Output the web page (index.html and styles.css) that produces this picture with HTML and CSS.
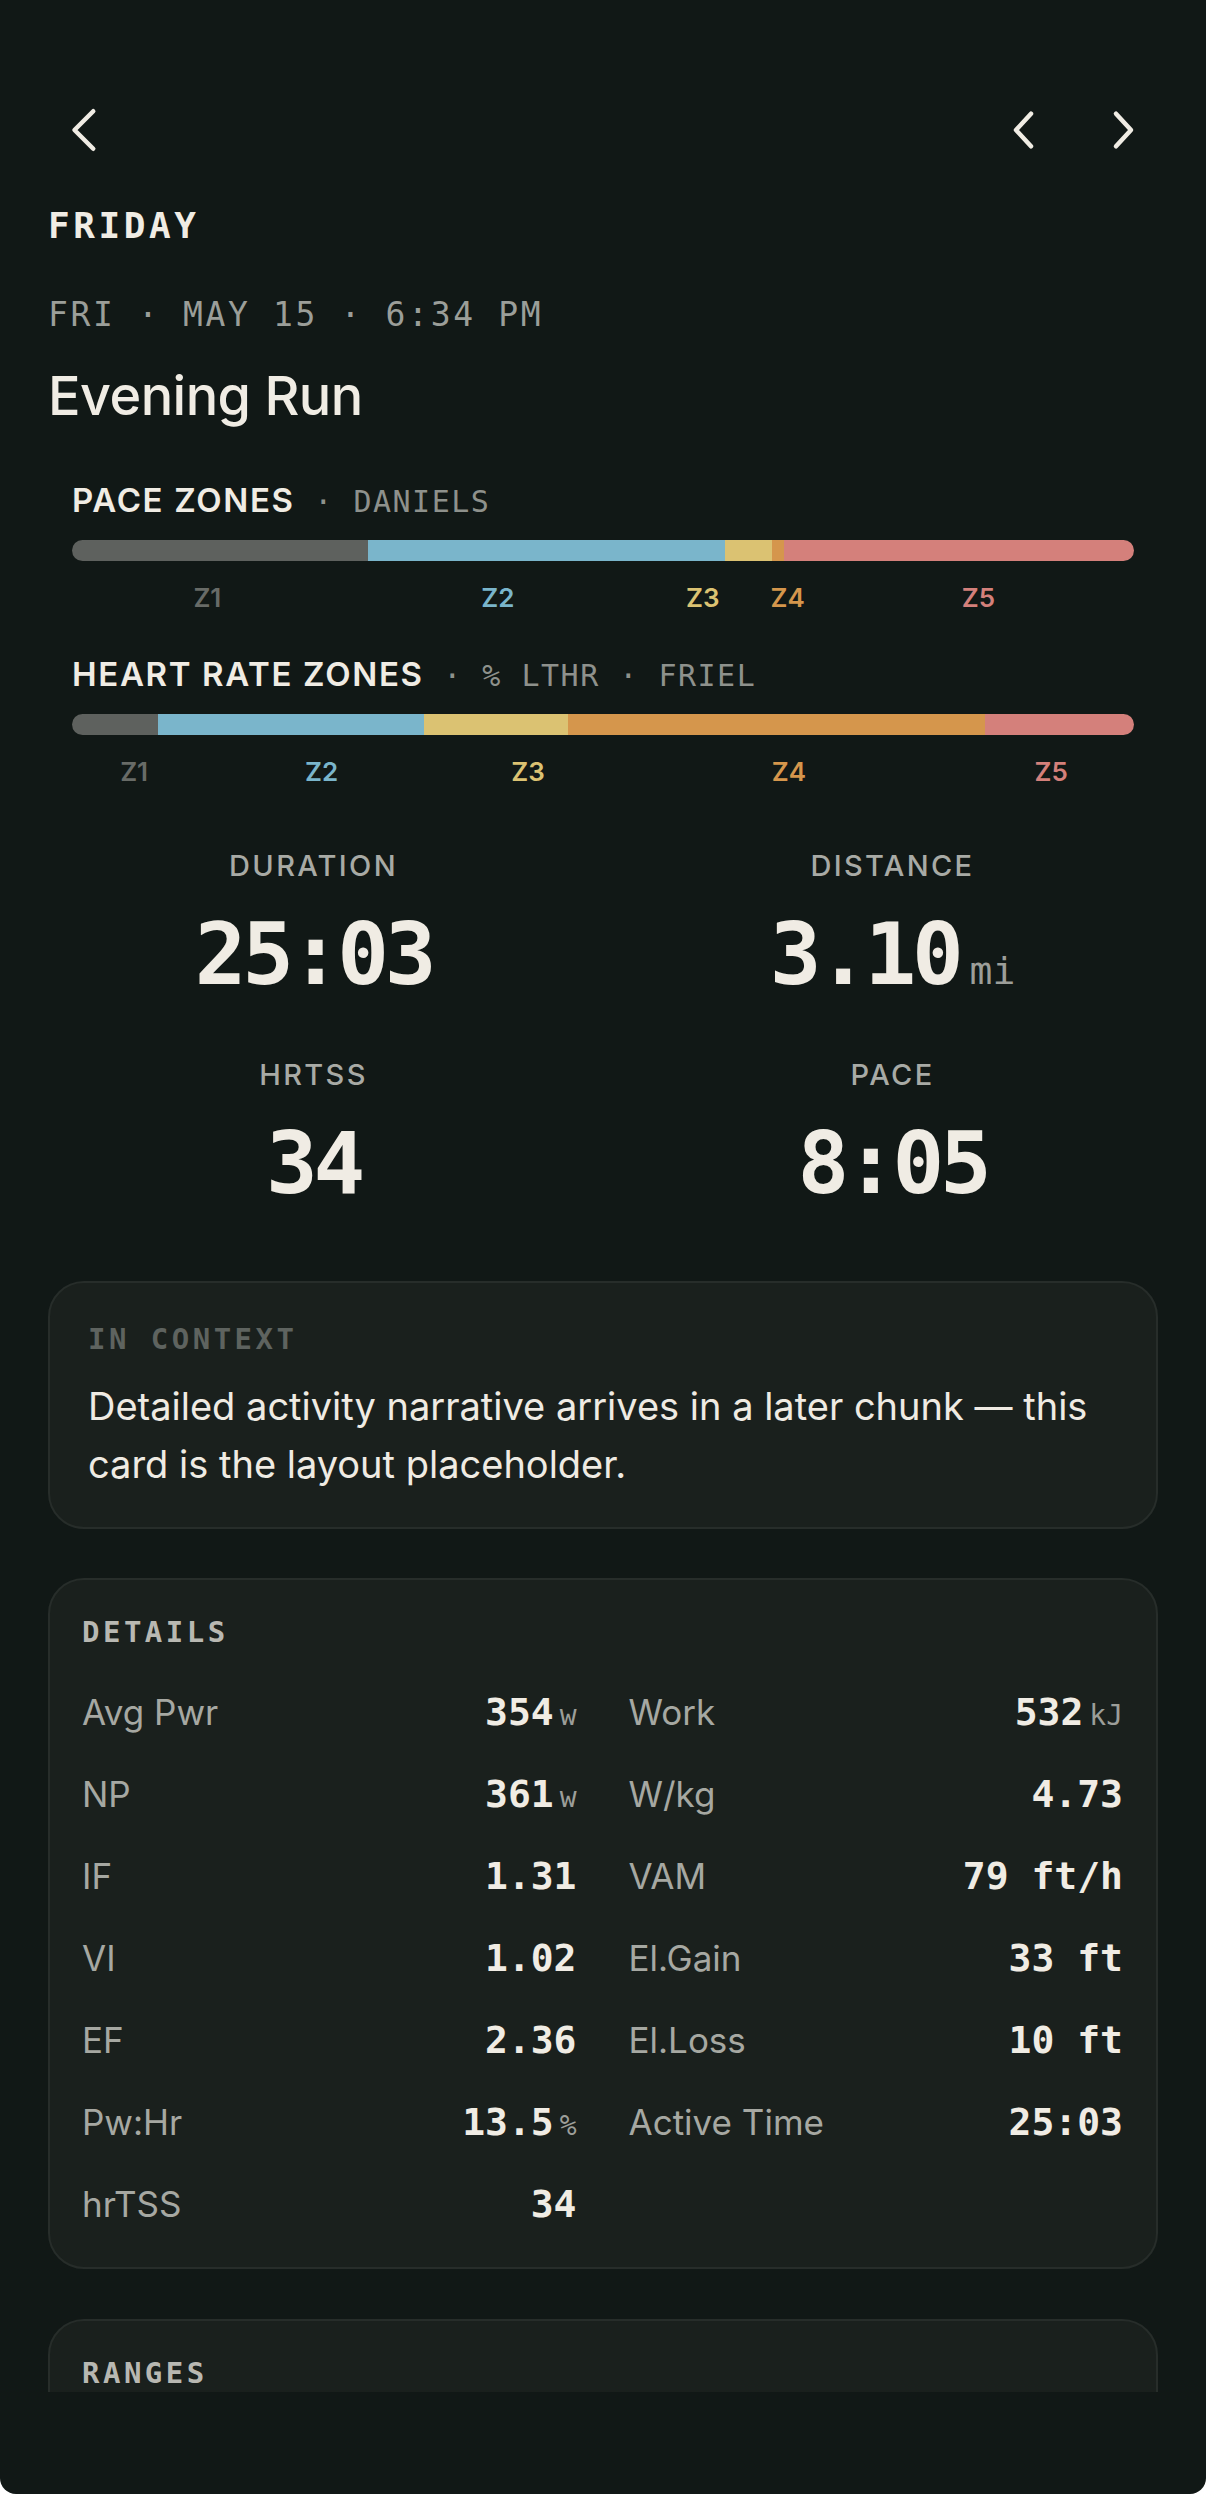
FILE: index.html
```html
<!DOCTYPE html>
<html lang="en">
<head>
  <meta charset="utf-8">
  <title>Evening Run</title>
  <link rel="stylesheet" href="styles.css">
</head>
<body>
  <div class="app">
    <div class="scroll">
      <nav class="topbar">
        <button class="icon-btn back" aria-label="Back">
          <svg viewBox="0 0 24 24" width="60" height="60"><path d="M14.5 4.5 L7 12 L14.5 19.5"/></svg>
        </button>
        <div class="pager">
          <button class="icon-btn" aria-label="Previous">
            <svg viewBox="0 0 24 24" width="60" height="60"><path d="M14 5.5 L8 12 L14 18.5"/></svg>
          </button>
          <button class="icon-btn" aria-label="Next">
            <svg viewBox="0 0 24 24" width="60" height="60"><path d="M10 5.5 L16 12 L10 18.5"/></svg>
          </button>
        </div>
      </nav>

      <div class="day">FRIDAY</div>
      <div class="when">FRI · MAY 15 · 6:34 PM</div>
      <h1 class="title">Evening Run</h1>

      <section class="zones">
        <div class="zone-block">
          <div class="zone-head"><span class="zone-name">PACE ZONES</span><span class="zone-meta"> · DANIELS</span></div>
          <div class="zone-bar">
            <span class="seg z1" style="width:27.9%"></span>
            <span class="seg z2" style="width:33.6%"></span>
            <span class="seg z3" style="width:4.4%"></span>
            <span class="seg z4" style="width:1.1%"></span>
            <span class="seg z5" style="width:33%"></span>
          </div>
          <div class="zone-labels">
            <span class="z1" style="width:25.5%">Z1</span>
            <span class="z2" style="width:29.2%">Z2</span>
            <span class="z3" style="width:9.4%">Z3</span>
            <span class="z4" style="width:6.6%">Z4</span>
            <span class="z5" style="width:29.3%">Z5</span>
          </div>
        </div>

        <div class="zone-block">
          <div class="zone-head"><span class="zone-name">HEART RATE ZONES</span><span class="zone-meta"> · % LTHR · FRIEL</span></div>
          <div class="zone-bar">
            <span class="seg z1" style="width:8.1%"></span>
            <span class="seg z2" style="width:25%"></span>
            <span class="seg z3" style="width:13.6%"></span>
            <span class="seg z4" style="width:39.3%"></span>
            <span class="seg z5" style="width:14%"></span>
          </div>
          <div class="zone-labels">
            <span class="z1" style="width:11.7%">Z1</span>
            <span class="z2" style="width:23.6%">Z2</span>
            <span class="z3" style="width:15.3%">Z3</span>
            <span class="z4" style="width:33.8%">Z4</span>
            <span class="z5" style="width:15.6%">Z5</span>
          </div>
        </div>
      </section>

      <section class="stats">
        <div class="stat">
          <div class="stat-label">DURATION</div>
          <div class="stat-value">25:03</div>
        </div>
        <div class="stat">
          <div class="stat-label">DISTANCE</div>
          <div class="stat-value">3.10<span class="unit">mi</span></div>
        </div>
        <div class="stat">
          <div class="stat-label">HRTSS</div>
          <div class="stat-value">34</div>
        </div>
        <div class="stat">
          <div class="stat-label">PACE</div>
          <div class="stat-value">8:05</div>
        </div>
      </section>

      <section class="card context">
        <div class="card-label">IN CONTEXT</div>
        <p>Detailed activity narrative arrives in a later chunk — this card is the layout placeholder.</p>
      </section>

      <section class="card details">
        <div class="card-label">DETAILS</div>
        <div class="detail-grid">
          <div class="detail-col">
            <div class="row"><span class="k">Avg Pwr</span><span class="v">354<small>w</small></span></div>
            <div class="row"><span class="k">NP</span><span class="v">361<small>w</small></span></div>
            <div class="row"><span class="k">IF</span><span class="v">1.31</span></div>
            <div class="row"><span class="k">VI</span><span class="v">1.02</span></div>
            <div class="row"><span class="k">EF</span><span class="v">2.36</span></div>
            <div class="row"><span class="k">Pw:Hr</span><span class="v">13.5<small>%</small></span></div>
            <div class="row"><span class="k">hrTSS</span><span class="v">34</span></div>
          </div>
          <div class="detail-col">
            <div class="row"><span class="k">Work</span><span class="v">532<small>kJ</small></span></div>
            <div class="row"><span class="k">W/kg</span><span class="v">4.73</span></div>
            <div class="row"><span class="k">VAM</span><span class="v">79 ft/h</span></div>
            <div class="row"><span class="k">El.Gain</span><span class="v">33 ft</span></div>
            <div class="row"><span class="k">El.Loss</span><span class="v">10 ft</span></div>
            <div class="row"><span class="k">Active Time</span><span class="v">25:03</span></div>
          </div>
        </div>
      </section>

      <section class="card ranges">
        <div class="card-label">RANGES</div>
      </section>
    </div>
  </div>
</body>
</html>
```

FILE: styles.css
```css
body {
  margin: 0;
  background: #ffffff;
}
.app {
  width: 1206px;
  height: 2494px;
  background: #111816;
  border-radius: 0 0 16px 16px;
  overflow: hidden;
  font-family: Inter, "Noto Sans", sans-serif;
  color: #f0ece4;
}
.scroll {
  height: 2392px;
  overflow: hidden;
  padding: 0 48px;
  box-sizing: border-box;
}

/* top navigation */
.topbar {
  display: flex;
  align-items: center;
  padding-top: 100px;
  height: 60px;
}
.icon-btn {
  width: 60px;
  height: 60px;
  padding: 0;
  border: none;
  background: none;
  display: flex;
}
.icon-btn path {
  fill: none;
  stroke: #f0ece4;
  stroke-width: 1.8;
  stroke-linecap: round;
  stroke-linejoin: round;
}
.back {
  margin-left: 9px;
}
.pager {
  margin-left: auto;
  margin-right: 7px;
  display: flex;
  gap: 35px;
}

/* header text */
.day {
  margin-top: 48px;
  font: 700 36px/36px "DejaVu Sans Mono", monospace;
  letter-spacing: 0.1em;
}
.when {
  margin-top: 54px;
  font: 400 33px/33px "DejaVu Sans Mono", monospace;
  letter-spacing: 0.08em;
  color: #9b9e99;
}
.title {
  margin: 37px 0 0;
  font: 500 54px/55px Inter, sans-serif;
  letter-spacing: -0.01em;
}

/* zone bars */
.zones {
  margin-top: 61px;
  padding: 0 24px;
}
.zone-block + .zone-block {
  margin-top: 47px;
}
.zone-head {
  font: 600 33px/33px Inter, sans-serif;
  letter-spacing: 0.05em;
  white-space: nowrap;
}
.zone-meta {
  font: 400 30px/0 "DejaVu Sans Mono", monospace;
  letter-spacing: 0.05em;
  color: #8e918c;
}
.zone-bar {
  margin-top: 23px;
  height: 21px;
  border-radius: 10.5px;
  display: flex;
  overflow: hidden;
}
.seg.z1 { background: #5e615e; }
.seg.z2 { background: #7ab5cb; }
.seg.z3 { background: #dbc272; }
.seg.z4 { background: #d5964c; }
.seg.z5 { background: #d4807b; }
.zone-labels {
  margin-top: 24px;
  display: flex;
  font: 600 26px/26px Inter, sans-serif;
}
.zone-labels span {
  text-align: center;
}
.zone-labels .z1 { color: #686b67; }
.zone-labels .z2 { color: #7ab5cb; }
.zone-labels .z3 { color: #dbc272; }
.zone-labels .z4 { color: #d5964c; }
.zone-labels .z5 { color: #d4807b; }

/* big stats */
.stats {
  margin: 66px -24px 0;
  display: grid;
  grid-template-columns: 1fr 1fr;
  row-gap: 46px;
  text-align: center;
}
.stat-label {
  font: 500 29px/29px Inter, sans-serif;
  letter-spacing: 0.08em;
  color: #a8aaa5;
}
.stat-value {
  margin-top: 31px;
  font: 700 86px/86px "DejaVu Sans Mono", monospace;
  letter-spacing: -0.05em;
}
.unit {
  margin-left: 10px;
  font-size: 38px;
  font-weight: 400;
  letter-spacing: 0;
  color: #9c9e99;
}

/* cards */
.card {
  background: #1a201d;
  border: 2px solid #272d2a;
  border-radius: 36px;
}
.card-label {
  font: 700 29px/29px "DejaVu Sans Mono", monospace;
  letter-spacing: 0.12em;
  color: #b8b8b2;
}
.context {
  margin-top: 75px;
  padding: 42px 38px 34px;
}
.context .card-label {
  color: #5e635f;
}
.context p {
  margin: 23px 0 0;
  font: 400 38px/58px Inter, sans-serif;
  color: #efebe3;
}
.details {
  margin-top: 49px;
  padding: 38px 33px 22px 32px;
}
.detail-grid {
  margin-top: 24px;
  display: grid;
  grid-template-columns: 1fr 1fr;
  column-gap: 52px;
}
.row {
  display: flex;
  justify-content: space-between;
  align-items: baseline;
  height: 82px;
  line-height: 82px;
}
.k {
  font: 400 35px/82px Inter, sans-serif;
  color: #a6a8a2;
}
.v {
  font: 700 38px/82px "DejaVu Sans Mono", monospace;
  color: #f0ece4;
}
.v small {
  margin-left: 6px;
  font-size: 28px;
  font-weight: 400;
  color: #9c9e99;
}
.ranges {
  margin-top: 50px;
  padding: 38px 32px;
  height: 200px;
}
```
